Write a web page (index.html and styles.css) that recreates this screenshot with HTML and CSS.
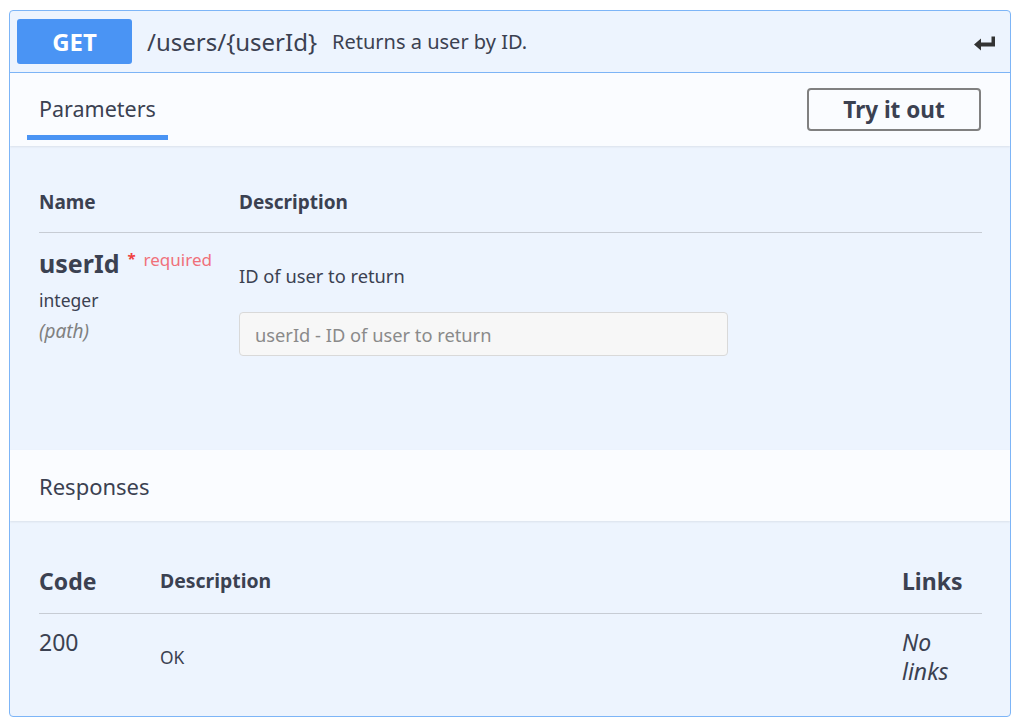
FILE: index.html
```html
<!DOCTYPE html>
<html>
  <head>
    <title>GET /users/{userId}</title>
    <link rel="stylesheet" href="styles.css">
  </head>
  <body>
    <div class="opblock">
      <!-- Operation summary -->
      <div class="opblock-summary">
        <span class="method">GET</span>
        <span class="path">/users/{userId}</span>
        <span class="summary-text">Returns a user by ID.</span>
        <svg class="return-icon" width="24" height="16" viewBox="0 0 24 16">
          <path d="M18.5 1.5h3.5v10H8v4L1 9.5 8 3.5v4h10.5z" fill="#333"/>
        </svg>
      </div>

      <!-- Parameters -->
      <div class="section-header">
        <div class="tab active">Parameters</div>
        <button class="try-out">Try it out</button>
      </div>
      <div class="parameters">
        <div class="param-grid head">
          <div>Name</div>
          <div>Description</div>
        </div>
        <div class="param-grid row">
          <div class="param-name">
            <div class="name-line">
              <span class="name">userId</span>
              <span class="required"><span class="star">*</span>required</span>
            </div>
            <div class="type">integer</div>
            <div class="in">(path)</div>
          </div>
          <div class="param-desc">
            <p>ID of user to return</p>
            <input type="text" placeholder="userId - ID of user to return" />
          </div>
        </div>
      </div>

      <!-- Responses -->
      <div class="section-header responses-header">
        <div class="title">Responses</div>
      </div>
      <div class="responses">
        <div class="resp-grid head">
          <div class="big">Code</div>
          <div>Description</div>
          <div class="big">Links</div>
        </div>
        <div class="resp-grid row">
          <div class="code">200</div>
          <div class="desc">OK</div>
          <div class="links">No<br>links</div>
        </div>
      </div>
    </div>
  </body>
</html>
```
FILE: styles.css
```css
/* Page */
body {
  margin: 0;
  padding: 10px 13px 6px 9px;
  background-color: #ffffff;
  font-family: "Noto Sans", "Open Sans", sans-serif;
  color: #3b4151;
}

/* Operation block */
.opblock {
  border: 1px solid #7db5f7;
  border-radius: 4px;
  background-color: #edf4fe;
  overflow: hidden;
}

.opblock-summary {
  display: flex;
  align-items: center;
  height: 61px;
  padding: 0 13px 0 7px;
  border-bottom: 1px solid #7db5f7;
}

.method {
  width: 115px;
  height: 45px;
  border-radius: 3px;
  background-color: #4a94f4;
  color: #ffffff;
  font-size: 24px;
  font-weight: 700;
  display: flex;
  align-items: center;
  justify-content: center;
  margin-right: 15px;
}

.path {
  font-size: 24px;
  color: #3b4151;
  margin-right: 15px;
}

.summary-text {
  font-size: 20px;
  color: #3b4151;
  flex: 1;
}

.return-icon {
  margin-top: 2px;
}

/* Section headers (Parameters / Responses) */
.section-header {
  display: flex;
  align-items: center;
  justify-content: space-between;
  height: 73px;
  padding: 0 29px 0 17px;
  background-color: #fafcff;
  box-shadow: 0 1px 2px rgba(0, 0, 0, 0.08);
  position: relative;
}

.tab {
  font-size: 21.5px;
  padding: 0 12px;
  height: 73px;
  line-height: 72px;
  box-sizing: border-box;
  position: relative;
}

.tab.active::after {
  content: "";
  position: absolute;
  left: 0;
  right: 0;
  bottom: 6px;
  height: 5px;
  background-color: #4a94f4;
}

.try-out {
  width: 174px;
  height: 43px;
  border: 2px solid #808080;
  border-radius: 4px;
  background-color: transparent;
  font-family: inherit;
  font-size: 22.5px;
  font-weight: 700;
  color: #3b4151;
  cursor: pointer;
}

/* Parameters table */
.parameters {
  padding: 43px 28px 94px 29px;
}

.param-grid {
  display: grid;
  grid-template-columns: 200px 1fr;
}

.param-grid.head {
  font-size: 19px;
  font-weight: 700;
  line-height: 26px;
  padding-bottom: 17px;
  border-bottom: 1px solid #c7ccd4;
}

.param-grid.row {
  padding-top: 13px;
}

.name-line {
  display: flex;
  align-items: flex-start;
  height: 34px;
}

.name {
  font-size: 25px;
  font-weight: 700;
  line-height: 34px;
}

.required {
  font-size: 17px;
  color: #f0707a;
  margin-left: 8px;
  line-height: 24px;
}

.required .star {
  color: #f04040;
  font-weight: 700;
  font-size: 15px;
  vertical-align: 2px;
  margin-right: 8px;
}

.type {
  font-size: 17.5px;
  line-height: 24px;
  margin-top: 8px;
}

.in {
  font-size: 19px;
  font-style: italic;
  line-height: 25px;
  color: #808080;
  margin-top: 7px;
}

.param-desc p {
  margin: 17px 0 24px 0;
  font-size: 18.3px;
  line-height: 25px;
}

.param-desc input {
  display: block;
  width: 489px;
  height: 44px;
  box-sizing: border-box;
  padding: 0 15px;
  border: 1px solid #d9d9d9;
  border-radius: 4px;
  background-color: #f7f7f7;
  font-family: inherit;
  font-size: 18.3px;
  color: #3b4151;
}

.param-desc input::placeholder {
  color: #8a8a8a;
}

/* Responses table */
.responses-header {
  padding-left: 29px;
  height: 71px;
}

.responses-header .title {
  font-size: 22px;
}

.responses {
  padding: 44px 28px 30px 29px;
}

.resp-grid {
  display: grid;
  grid-template-columns: 121px 1fr 80px;
}

.resp-grid.head {
  align-items: center;
  font-size: 19.4px;
  font-weight: 700;
  line-height: 32px;
  padding-bottom: 16px;
  border-bottom: 1px solid #c7ccd4;
}

.resp-grid.head .big {
  font-size: 23px;
}

.resp-grid.row {
  padding-top: 12px;
}

.code {
  font-size: 23px;
  line-height: 32px;
}

.desc {
  font-size: 17.4px;
  line-height: 24px;
  padding-top: 19px;
}

.links {
  font-size: 23px;
  font-style: italic;
  line-height: 29px;
  padding-top: 2px;
}
```
